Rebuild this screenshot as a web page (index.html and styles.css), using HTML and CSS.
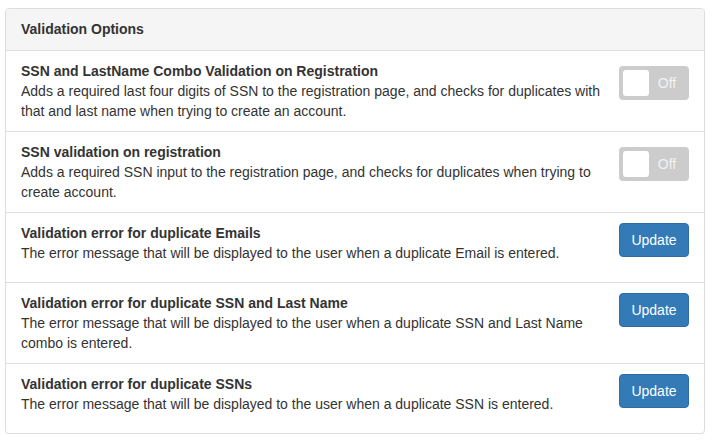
FILE: index.html
```html
<!DOCTYPE html>
<html>
<head>
<meta charset="utf-8">
<link rel="stylesheet" href="styles.css">
</head>
<body>
<div class="panel">
  <div class="panel-heading">Validation Options</div>
  <div class="list">
    <div class="item">
      <div class="text">
        <div class="title">SSN and LastName Combo Validation on Registration</div>
        <div class="desc">Adds a required last four digits of SSN to the registration page, and checks for duplicates with that and last name when trying to create an account.</div>
      </div>
      <div class="toggle"><span class="knob"></span><span class="label">Off</span></div>
    </div>
    <div class="item">
      <div class="text">
        <div class="title">SSN validation on registration</div>
        <div class="desc">Adds a required SSN input to the registration page, and checks for duplicates when trying to create account.</div>
      </div>
      <div class="toggle"><span class="knob"></span><span class="label">Off</span></div>
    </div>
    <div class="item short">
      <div class="text">
        <div class="title">Validation error for duplicate Emails</div>
        <div class="desc">The error message that will be displayed to the user when a duplicate Email is entered.</div>
      </div>
      <button class="btn">Update</button>
    </div>
    <div class="item">
      <div class="text">
        <div class="title">Validation error for duplicate SSN and Last Name</div>
        <div class="desc">The error message that will be displayed to the user when a duplicate SSN and Last Name combo is entered.</div>
      </div>
      <button class="btn">Update</button>
    </div>
    <div class="item short">
      <div class="text">
        <div class="title">Validation error for duplicate SSNs</div>
        <div class="desc">The error message that will be displayed to the user when a duplicate SSN is entered.</div>
      </div>
      <button class="btn">Update</button>
    </div>
  </div>
</div>
</body>
</html>
```

FILE: styles.css
```css
* { box-sizing: border-box; }
html, body { margin: 0; padding: 0; background: #fff; }
body {
  padding: 8px 9px 0 5px;
  font-family: "Liberation Sans", Arial, Helvetica, sans-serif;
  font-size: 14px;
  line-height: 20px;
  color: #333;
}
.panel {
  width: 700px;
  border: 1px solid #ddd;
  border-radius: 4px;
  box-shadow: 0 1px 1px rgba(0,0,0,0.05);
  overflow: hidden;
}
.panel-heading {
  background: #f5f5f5;
  border-bottom: 1px solid #ddd;
  padding: 10px 15px 11px;
  font-weight: bold;
  color: #333;
}
.item {
  display: flex;
  align-items: flex-start;
  gap: 14px;
  padding: 10px 15px;
  min-height: 70px;
  border-top: 1px solid #ddd;
}
.item:first-child { border-top: none; }
.text { flex: 1; min-width: 0; }
.title { font-weight: bold; }
.toggle {
  flex: none;
  width: 70px;
  height: 34px;
  margin-top: 5px;
  background: #ccc;
  border-radius: 4px;
  display: flex;
  align-items: center;
  padding-left: 4px;
}
.knob {
  width: 26px;
  height: 26px;
  background: #fff;
  border-radius: 3px;
}
.label {
  flex: 1;
  text-align: center;
  color: #f2f2f2;
  padding-right: 4px;
}
.btn {
  flex: none;
  width: 70px;
  height: 34px;
  background: #337ab7;
  border: 1px solid #2e6da4;
  border-radius: 4px;
  color: #fff;
  font-family: inherit;
  font-size: 14px;
  line-height: 20px;
  padding: 6px 0;
  margin-top: 0;
}
```
